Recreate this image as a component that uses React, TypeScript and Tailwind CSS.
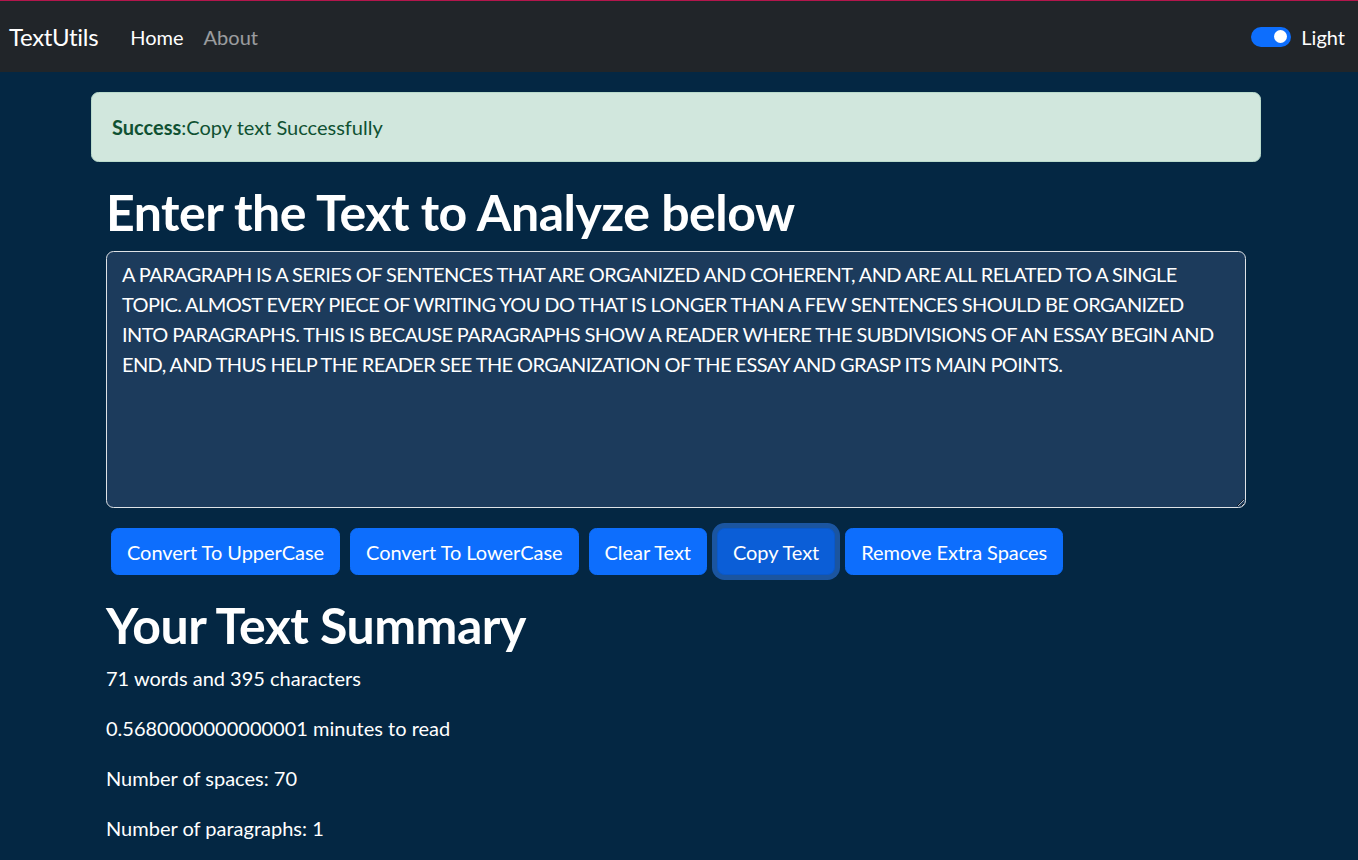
import React, { useState } from "react";

const TEXT =
  "A PARAGRAPH IS A SERIES OF SENTENCES THAT ARE ORGANIZED AND COHERENT, AND ARE ALL RELATED TO A SINGLE\nTOPIC. ALMOST EVERY PIECE OF WRITING YOU DO THAT IS LONGER THAN A FEW SENTENCES SHOULD BE ORGANIZED\nINTO PARAGRAPHS. THIS IS BECAUSE PARAGRAPHS SHOW A READER WHERE THE SUBDIVISIONS OF AN ESSAY BEGIN AND\nEND, AND THUS HELP THE READER SEE THE ORGANIZATION OF THE ESSAY AND GRASP ITS MAIN POINTS.";

function Btn({ children, focused }: { children: React.ReactNode; focused?: boolean }) {
  return (
    <button
      className={
        focused
          ? "mx-[5px] h-[47px] rounded-[7.5px] border border-[#0a58ca] bg-[#0b5ed7] px-[15px] text-[20px] leading-[30px] tracking-[-0.05px] text-white shadow-[0_0_0_5px_rgba(49,132,253,0.5)]"
          : "mx-[5px] h-[47px] rounded-[7.5px] border border-[#0d6efd] bg-[#0d6efd] px-[15px] text-[20px] leading-[30px] tracking-[-0.05px] text-white"
      }
    >
      {children}
    </button>
  );
}

export default function App() {
  const [text, setText] = useState(TEXT);
  return (
    <div className="min-h-[860px] bg-[#042743] font-['Lato','Segoe_UI',sans-serif] text-white">
      <nav className="flex h-[72px] items-center justify-between border-t border-[#b3164c] bg-[#212529] pl-[9px] pr-[13px]">
        <div className="flex items-center">
          <span className="mr-[22px] text-[24px] leading-[37px] tracking-[-0.3px] text-white">TextUtils</span>
          <a className="px-[10px] text-[20px] leading-[30px] text-white">Home</a>
          <a className="px-[10px] text-[20px] leading-[30px] text-white/55">About</a>
        </div>
        <div className="flex items-center gap-[10px]">
          <div className="flex h-[20px] w-[40px] items-center justify-end rounded-full bg-[#0d6efd] pr-[4px]">
            <div className="h-[13px] w-[13px] rounded-full bg-white" />
          </div>
          <span className="text-[20px] leading-[30px] text-white">Light</span>
        </div>
      </nav>

      <div className="ml-[91px] w-[1170px] pt-[20px]">
        <div className="mb-[20px] flex h-[70px] items-center rounded-[7.5px] border border-[#badbcc] bg-[#d1e7dd] px-[20px] text-[20px] text-[#0f5132]">
          <strong className="font-bold">Success</strong>:Copy text Successfully
        </div>

        <div className="px-[15px]">
          <h1 className="mb-[9px] text-[50px] font-bold leading-[60px] tracking-[-0.5px]">Enter the Text to Analyze below</h1>
          <textarea
            value={text}
            onChange={(e) => setText(e.target.value)}
            rows={8}
            className="block h-[257px] w-[1140px] resize-y rounded-[7.5px] border border-[#dee2e6] bg-[#1c3b5c] px-[15px] py-[7px] text-[20px] leading-[30px] tracking-[-0.6px] text-white outline-none"
          />
          <div className="mt-[20px] flex">
            <Btn>Convert To UpperCase</Btn>
            <Btn>Convert To LowerCase</Btn>
            <Btn>Clear Text</Btn>
            <Btn focused>Copy Text</Btn>
            <Btn>Remove Extra Spaces</Btn>
          </div>

          <div className="mt-[20px]">
            <h1 className="mb-[8px] text-[50px] font-bold leading-[60px] tracking-[-0.5px]">Your Text Summary</h1>
            <p className="mb-[20px] text-[20px] leading-[30px]">71 words and 395 characters</p>
            <p className="mb-[20px] text-[20px] leading-[30px]">0.5680000000000001 minutes to read</p>
            <p className="mb-[20px] text-[20px] leading-[30px]">Number of spaces: 70</p>
            <p className="mb-[20px] text-[20px] leading-[30px]">Number of paragraphs: 1</p>
          </div>
        </div>
      </div>
    </div>
  );
}
